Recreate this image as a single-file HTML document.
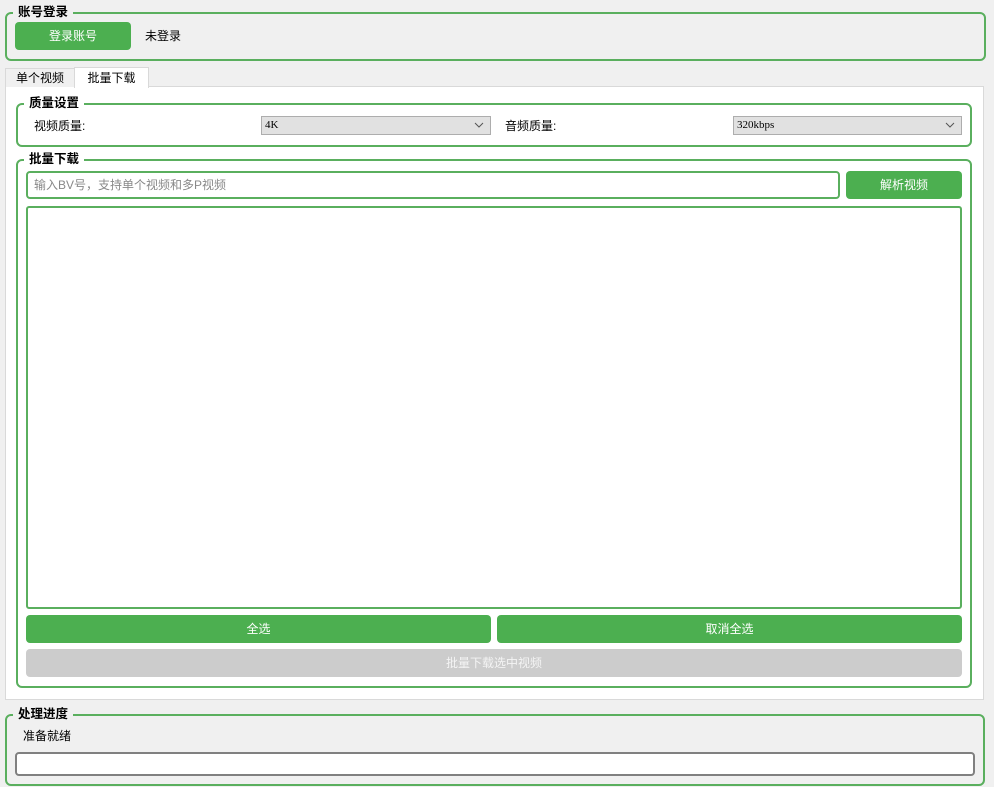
<!DOCTYPE html>
<html><head><meta charset="utf-8"><style>
*{box-sizing:border-box;margin:0;padding:0}
body{width:994px;height:787px;background:#f0f0f0;position:relative;overflow:hidden;font-family:"Liberation Sans","Noto Sans CJK SC",sans-serif;font-size:12px;color:#000}
.a{position:absolute}
.g{position:absolute;border:2px solid #5aaf5e;border-radius:6px}
.t{position:absolute;font-weight:bold;font-size:12.5px;line-height:16px;padding:0 5px;background:#f0f0f0}
.w{background:#fff}
.btn{position:absolute;background:#4caf50;color:#fff;border-radius:4px;text-align:center;font-size:12px}
.cb{position:absolute;background:#e1e1e1;border:1px solid #adadad;font-family:"Liberation Serif","Noto Serif CJK SC",serif;font-size:11px;line-height:16px;padding-left:3px}
.cb svg{position:absolute;right:6px;top:5px}
</style></head><body>
<div class="g" style="left:5px;top:12px;width:981px;height:49px"></div>
<div class="t" style="left:13px;top:4px">账号登录</div>
<div class="btn" style="left:15px;top:22px;width:116px;height:28px;line-height:28px">登录账号</div>
<div class="a" style="left:145px;top:27px;line-height:18px">未登录</div>

<div class="a" style="left:5px;top:86px;width:979px;height:614px;background:#fff;border:1px solid #d9d9d9"></div>
<div class="a" style="left:5px;top:68px;width:70px;height:19px;border:1px solid #d9d9d9;border-bottom:none;background:#f0f0f0;text-align:center;line-height:18px">单个视频</div>
<div class="a" style="left:74px;top:67px;width:75px;height:21px;border:1px solid #d9d9d9;border-bottom:none;background:#fff;text-align:center;line-height:20px">批量下载</div>

<div class="g" style="left:16px;top:103px;width:956px;height:44px"></div>
<div class="t w" style="left:24px;top:95px">质量设置</div>
<div class="a" style="left:34px;top:117px;line-height:18px">视频质量:</div>
<div class="cb" style="left:261px;top:116px;width:230px;height:19px">4K<svg width="10" height="6"><path d="M1 1L5 5L9 1" fill="none" stroke="#555"/></svg></div>
<div class="a" style="left:505px;top:117px;line-height:18px">音频质量:</div>
<div class="cb" style="left:733px;top:116px;width:229px;height:19px">320kbps<svg width="10" height="6"><path d="M1 1L5 5L9 1" fill="none" stroke="#555"/></svg></div>

<div class="g" style="left:16px;top:159px;width:956px;height:529px"></div>
<div class="t w" style="left:24px;top:151px">批量下载</div>
<div class="a" style="left:26px;top:171px;width:814px;height:28px;border:2px solid #5aaf5e;border-radius:4px;background:#fff;color:#888;font-size:12px;line-height:24px;padding-left:6px">输入BV号，支持单个视频和多P视频</div>
<div class="btn" style="left:846px;top:171px;width:116px;height:28px;line-height:28px">解析视频</div>
<div class="a" style="left:26px;top:206px;width:936px;height:403px;border:2px solid #5aaf5e;border-radius:3px;background:#fff"></div>
<div class="btn" style="left:26px;top:615px;width:465px;height:28px;line-height:28px">全选</div>
<div class="btn" style="left:497px;top:615px;width:465px;height:28px;line-height:28px">取消全选</div>
<div class="btn" style="left:26px;top:649px;width:936px;height:28px;line-height:28px;background:#cccccc;color:#f4f4f4">批量下载选中视频</div>

<div class="g" style="left:5px;top:714px;width:980px;height:72px"></div>
<div class="t" style="left:13px;top:706px">处理进度</div>
<div class="a" style="left:23px;top:727px;line-height:18px">准备就绪</div>
<div class="a" style="left:15px;top:752px;width:960px;height:24px;border:2px solid #808080;border-radius:4px;background:#fff"></div>
</body></html>
